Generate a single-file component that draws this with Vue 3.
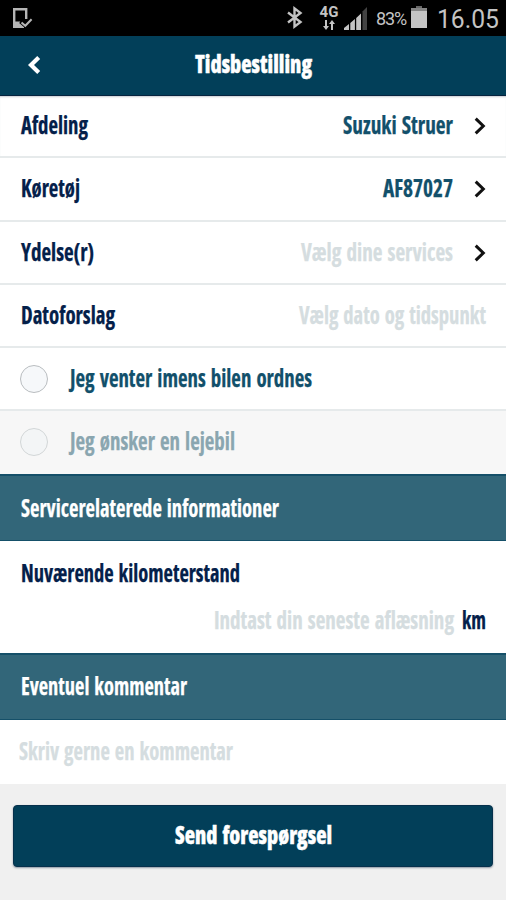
<script setup>
import { h } from 'vue'

// Condensed label: a line of text fitted to a fixed width.
const Label = (props) =>
  h('svg', { class: 'label', width: props.w, height: 30, role: 'text' }, [
    h('text', { x: 0, y: 23, textLength: props.w, lengthAdjust: 'spacingAndGlyphs', fill: 'currentColor' }, props.text),
  ])
Label.props = ['text', 'w']

const rows = [
  { name: 'Afdeling', nw: 67, value: 'Suzuki Struer', vw: 110, arrow: true, tone: 'set' },
  { name: 'Køretøj', nw: 59, value: 'AF87027', vw: 70, arrow: true, tone: 'set' },
  { name: 'Ydelse(r)', nw: 73, value: 'Vælg dine services', vw: 152, arrow: true, tone: 'hint' },
  { name: 'Datoforslag', nw: 94, value: 'Vælg dato og tidspunkt', vw: 187, arrow: false, tone: 'hint' },
]
const options = [
  { text: 'Jeg venter imens bilen ordnes', w: 242, off: false },
  { text: 'Jeg ønsker en lejebil', w: 165, off: true },
]
</script>

<template>
  <div class="screen">
    <div class="status">
      <svg class="phone" width="22" height="24" viewBox="0 0 22 24" fill="none">
        <path d="M14.2 12V2.2H2.2v17.6H11" stroke="#b5b5b5" stroke-width="2.4" />
        <path d="M2 14.5h6l4 3.5v3H2z" fill="#b5b5b5" />
        <path d="M8.5 14.5l4.8 4L20.5 12" stroke="#000" stroke-width="4.2" />
        <path d="M9.5 15.5l3.8 3.3 6.3-6.6" stroke="#b5b5b5" stroke-width="2" />
      </svg>
      <svg class="bt" width="18" height="24" viewBox="0 0 18 24" fill="none" stroke="#c4c4c4" stroke-width="2.4">
        <path d="M2 6.5l12.5 9.5-6 4.6V2.4l6 4.6L2 16.5" />
      </svg>
      <div class="net">
        <span>4G</span>
        <svg width="14" height="10" viewBox="0 0 14 10" fill="#c4c4c4">
          <path d="M3 0h2v6h2L4 10 1 6h2zM9 10h2V4h2L10 0 7 4h2z" />
        </svg>
      </div>
      <svg class="signal" width="24" height="24" viewBox="0 0 24 24">
        <path d="M0 24v-2l5-4v6zM6.3 24v-7l4.6-4v11zM12.2 24V12l4.8-4.5V24z" fill="#c4c4c4" />
        <path d="M18.5 24V5.5L23 1v23z" fill="#424242" />
      </svg>
      <span class="pct">83%</span>
      <svg class="battery" width="16" height="22" viewBox="0 0 16 22">
        <path d="M5 0h6v3H5z" fill="#666" />
        <path d="M0 2h16v20H0z" fill="#858585" />
        <path d="M0 5h16v17H0z" fill="#c4c4c4" />
      </svg>
      <svg class="clock" width="62" height="24">
        <text x="0" y="20" textLength="62" lengthAdjust="spacingAndGlyphs" fill="#c4c4c4">16.05</text>
      </svg>
    </div>

    <header class="bar">
      <svg class="back" width="14" height="20" viewBox="0 0 14 20" fill="none" stroke="#fff" stroke-width="4.2">
        <path d="M11.7 2.5L4 10l7.7 7.5" />
      </svg>
      <Label class="heavy" text="Tidsbestilling" :w="117" />
    </header>

    <div v-for="(r, i) in rows" :key="r.name" class="row" :class="{ first: i === 0, second: i === 1 }">
      <Label class="name" :text="r.name" :w="r.nw" />
      <Label :class="r.tone" :text="r.value" :w="r.vw" />
      <svg v-if="r.arrow" class="chev" width="12" height="18" viewBox="0 0 12 18" fill="none" stroke="#111" stroke-width="3">
        <path d="M1.7 1.7L9.3 9l-7.6 7.3" />
      </svg>
    </div>

    <div v-for="o in options" :key="o.text" class="row option" :class="{ off: o.off }">
      <span class="radio"></span>
      <Label :text="o.text" :w="o.w" />
    </div>

    <div class="section"><Label text="Servicerelaterede informationer" :w="258" /></div>
    <div class="mileage">
      <Label class="name" text="Nuværende kilometerstand" :w="219" />
      <div class="entry">
        <Label class="hint" text="Indtast din seneste aflæsning" :w="240" />
        <Label class="name tight" text="km" :w="24" />
      </div>
    </div>
    <div class="section last"><Label text="Eventuel kommentar" :w="166" /></div>
    <div class="comment"><Label class="hint" text="Skriv gerne en kommentar" :w="214" /></div>

    <footer class="foot">
      <button class="send"><Label class="heavy" text="Send forespørgsel" :w="157" /></button>
    </footer>
  </div>
</template>

<style>
body { margin: 0; background: #f0f0f0; }
.label {
  display: block;
  flex: none;
  overflow: visible;
  font-family: "Open Sans", "Noto Sans", sans-serif;
  font-size: 24px;
  font-weight: 700;
  font-stretch: 75%;
  word-spacing: 1.5px;
  stroke: currentColor;
  stroke-width: 0.25px;
}
</style>

<style scoped>
.screen { width: 506px; height: 900px; overflow: hidden; background: #f0f0f0; display: flex; flex-direction: column; }
.screen > * { flex: none; box-sizing: border-box; }

.status { height: 36px; background: #000; color: #c4c4c4; display: flex; align-items: flex-start; padding: 6px 7px 0 12px; font-family: Roboto, sans-serif; }
.phone { margin-top: 1px; }
.bt { margin-left: auto; margin-right: 15px; }
.net { width: 20px; display: flex; flex-direction: column; align-items: center; font: 700 15px/14px Roboto, sans-serif; margin-right: 5px; margin-top: -1px; }
.net svg { margin-top: 1px; }
.signal { margin-right: 8px; }
.pct { width: 32px; font-size: 18px; line-height: 26px; letter-spacing: -1.1px; white-space: nowrap; }
.battery { margin: 0 10px 0 3px; }
.clock { font-family: Roboto, sans-serif; font-size: 26px; overflow: visible; margin-top: 2px; }

.bar { height: 60px; background: #023f59; border-bottom: 1px solid #06243f; color: #fff; display: grid; grid-template-columns: 28px 1fr 28px; align-items: center; justify-items: center; padding: 0 20px 1px; }
.heavy { font-weight: 800; stroke-width: 0.4px; }

.row { height: 63px; background: #fff; border-bottom: 2px solid #e6eaeb; display: flex; align-items: center; padding: 0 20px 0 21px; }
.row.first { height: 62px; box-shadow: inset 0 2px 2px -1px #c9ccd2; }
.row.second { height: 64px; }
.name { color: #04204a; margin-right: auto; }
.set { color: #12506b; }
.hint { color: #d5dde0; }
.chev { margin-left: 21px; }

.option { color: #12506b; padding-left: 20px; gap: 22px; }
.radio { width: 28px; height: 28px; box-sizing: border-box; border: 1px solid #b9bdc0; border-radius: 50%; background: #f6f8fa; }
.off { color: #8aa6b0; background: #f7f7f7; border-bottom: 0; padding-bottom: 1px; }
.off .radio { border-color: #d2d6d7; background: #f3f5f6; }

.section { height: 67px; background: #326679; border-top: 2px solid #155069; border-bottom: 1px solid #155069; color: #fff; display: flex; align-items: center; padding: 1px 21px 0; }
.section.last { padding: 0 21px 1px; }
.mileage { height: 112px; background: #fff; padding: 18px 20px 0 21px; display: flex; flex-direction: column; gap: 17px; }
.entry { display: flex; justify-content: flex-end; gap: 8px; }
.tight { margin: 0; }
.comment { height: 64px; background: #fff; display: flex; align-items: center; padding: 0 0 0 19px; }

.foot { padding: 21px 13px 0; }
.send { width: 480px; height: 62px; box-sizing: border-box; display: flex; align-items: center; justify-content: center; padding: 0; border: 1px solid #06304c; border-radius: 4px; background: #023f59; color: #fff; box-shadow: 0 1px 2px #8c98a4; }
</style>
